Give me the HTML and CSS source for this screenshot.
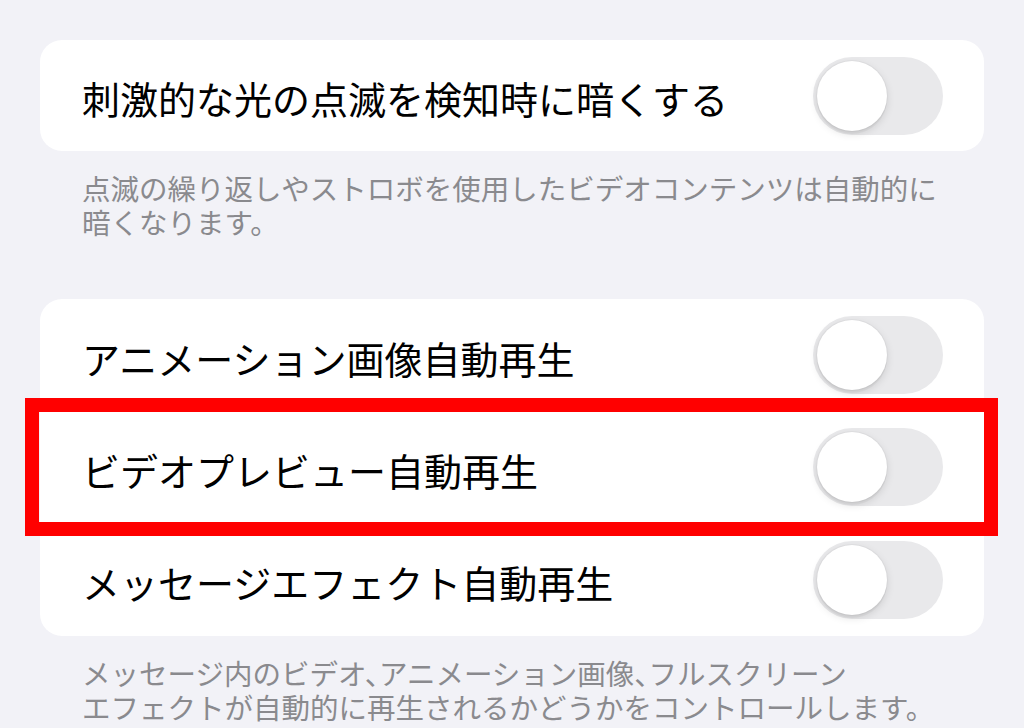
FILE: index.html
```html
<!DOCTYPE html>
<html lang="ja">
<head>
<meta charset="utf-8">
<title>設定</title>
<link rel="stylesheet" href="styles.css">
</head>
<body>
<main class="screen">
  <section class="group">
    <div class="card">
      <div class="row">
        <span class="label">刺激的な光の点滅を検知時に暗くする</span>
        <span class="toggle"><span class="knob"></span></span>
      </div>
    </div>
    <p class="footer"><span class="line">点滅の繰り返しやストロボを使用したビデオコンテンツは自動的に</span><span class="line">暗くなります。</span></p>
  </section>
  <section class="group">
    <div class="card">
      <div class="row">
        <span class="label">アニメーション画像自動再生</span>
        <span class="toggle"><span class="knob"></span></span>
      </div>
      <div class="row row-highlight">
        <span class="label">ビデオプレビュー自動再生</span>
        <span class="toggle"><span class="knob"></span></span>
      </div>
      <div class="row">
        <span class="label">メッセージエフェクト自動再生</span>
        <span class="toggle"><span class="knob"></span></span>
      </div>
    </div>
    <p class="footer"><span class="line">メッセージ内のビデオ、アニメーション画像、フルスクリーン</span><span class="line">エフェクトが自動的に再生されるかどうかをコントロールします。</span></p>
  </section>
</main>
</body>
</html>
```

FILE: styles.css
```css
html, body {
  margin: 0;
  padding: 0;
  background: #f2f2f7;
}

body {
  width: 1024px;
  height: 728px;
  overflow: hidden;
  font-family: "Noto Sans CJK JP", "Noto Sans", sans-serif;
  color: #000;
}

.screen {
  display: flex;
  flex-direction: column;
  padding: 40px 40px 0 40px;
  gap: 60px;
}

.group {
  display: flex;
  flex-direction: column;
}

.card {
  background: #ffffff;
  border-radius: 22px;
  display: flex;
  flex-direction: column;
}

.row {
  position: relative;
  height: 112.3px;
  display: flex;
  align-items: center;
  justify-content: space-between;
  padding: 0 41px 0 42px;
}

.card > .row:only-child {
  height: 111px;
}

.label {
  font-size: 38px;
  line-height: 1;
  letter-spacing: 0;
  padding-top: 5px;
}

.toggle {
  width: 130px;
  height: 78px;
  border-radius: 39px;
  background: #e9e9eb;
  display: flex;
  align-items: center;
  padding: 0 4px;
  box-sizing: border-box;
}

.knob {
  width: 70px;
  height: 70px;
  border-radius: 50%;
  background: #ffffff;
  box-shadow: 0 3px 8px rgba(0, 0, 0, 0.12), 0 3px 1px rgba(0, 0, 0, 0.04), 0 0 0 1px rgba(0, 0, 0, 0.03);
}

.row-highlight::after {
  content: "";
  position: absolute;
  left: -15px;
  right: -14px;
  top: -13px;
  bottom: -12px;
  border: 14px solid #ff0000;
  pointer-events: none;
}

.footer {
  margin: 0;
  padding: 20px 42px 0 42px;
  font-size: 28.5px;
  line-height: 34px;
  color: #8a8a8e;
  font-feature-settings: "halt";
  display: flex;
  flex-direction: column;
}

.line {
  display: block;
  height: 34px;
  white-space: nowrap;
}
```
